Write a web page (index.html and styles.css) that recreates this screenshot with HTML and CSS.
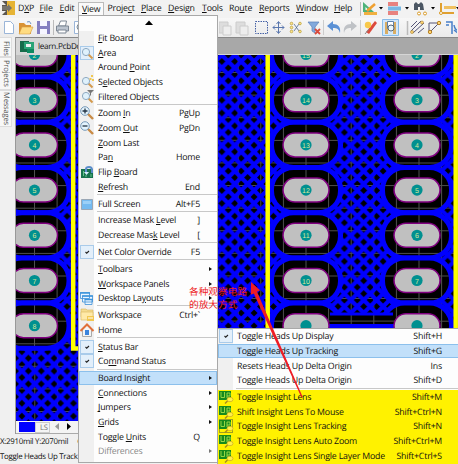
FILE: index.html
```
<!DOCTYPE html>
<html lang="en">
<head>
<meta charset="utf-8">
<title>DXP</title>
<link rel="stylesheet" href="styles.css">
</head>
<body>
<div class="app">
  <nav class="menubar">
    <svg class="logo" width="16" height="16" viewBox="0 0 16 16"><path fill="#5b5650" d="M2 1h5v14H2z"/><path fill="#e6b435" d="M7 1h8v14H7z"/><path fill="#77746d" d="M2 6h6V4l4 4-4 4v-2H2z"/><path fill="#eee" d="M2 1l4 4H2zM2 15l4-4H2z"/></svg>
    <span>D<u>X</u>P</span><span><u>F</u>ile</span><span><u>E</u>dit</span><span class="open"><u>V</u>iew</span><span>Proje<u>c</u>t</span><span><u>P</u>lace</span><span><u>D</u>esign</span><span><u>T</u>ools</span><span>Ro<u>u</u>te</span><span><u>R</u>eports</span><span><u>W</u>indow</span><span><u>H</u>elp</span>
    <svg width="99" height="18" viewBox="0 0 99 18"><path stroke="#bbb" d="M1.500 2v14"/><path fill="#4db37a" d="M4 2v10h11z"/><path fill="#fff" d="M6.500 7v3h3z"/><path stroke="#f0a030" stroke-width="2.500" d="M8 11l8-7"/><path fill="#f0b040" d="M5 12h13v3H5z"/><path d="M20 7h4l-2 2.500zM46 7h4l-2 2.500zM72 7h4l-2 2.500zM97 7h4l-2 2.500z"/><path fill="#e8827e" d="M29 2h10v4H29zM29 11h10v4H29z"/><path fill="#79b8e3" d="M29 6.500h13v4H29z"/><path fill="#4b5663" d="M55 4l2-2 2 2h1l2-2 2 2 1 6h-4V7h-2v3h-4z"/><g fill="#fff" stroke="#d99b28"><circle cx="60" cy="13.500" r="1.500"/><circle cx="66" cy="13.500" r="1.500"/></g><path fill="none" stroke="#e0a030" stroke-width="2" d="M82 3v10h13"/><path fill="#f0c060" d="M85 6h12v3H85z"/><circle cx="82" cy="13" r="1.500" fill="#fff" stroke="#d99b28"/></svg>
  </nav>
  <div class="toolbar">
    <svg width="84" height="20" viewBox="0 0 84 20"><path fill="#fff" stroke="#9ab5d8" d="M4.500 3.500h6l3 3v9h-9z"/><path fill="#d99335" d="M19 5h5l2 2h5v9H19z"/><path fill="#ffdc82" stroke="#d7a043" stroke-width=".6" d="M22 9h11l-3 7H19z"/><path fill="none" stroke="#6d94c4" d="M27 4q3-2 4 2"/><path fill="#837ec0" d="M37 3h13v13H37z"/><path fill="#f5f5ff" d="M40 3h7v5h-7zM40 11h7v5h-7z"/><path stroke="#bbb" d="M53.500 2v15"/><path fill="#fff" stroke="#7d8794" d="M58.500 8l2-5h6l-1 5z"/><path fill="#bcc4cf" stroke="#7d8794" d="M56.500 8h12v5h-12z"/><path fill="#fff" stroke="#7d8794" d="M58 12h8v3h-8z"/><path fill="#fff" stroke="#9ab5d8" d="M74.500 3.500h8v12h-8z"/><circle cx="80" cy="9" r="3" fill="#dcefff" stroke="#789"/></svg>
    <svg width="238" height="20" viewBox="0 0 238 20"><g fill="#ddd" stroke="#ccc"><path d="M0 4h9v11H0zM17 4h9v11h-9z"/><path fill="#eee" d="M4 8h8v9H4zM21 8h8v9h-8z"/></g><path fill="none" stroke="#4460a5" stroke-dasharray="1.500 1" d="M36.500 3.500h12v12h-12z"/><path fill="none" stroke="#5a77ae" d="M59.500 4v11M54 9.500h11M57.500 6l2-2.500 2 2.500M57.500 13l2 2.500 2-2.500M56 7.500l-2 2 2 2M63 7.500l2 2-2 2"/><path fill="none" stroke="#506a8c" stroke-width=".8" d="M75 6l5 7M75 13l5-7"/><g fill="#ffe88a" stroke="#b49835" stroke-width=".7"><circle cx="72.500" cy="5.500" r="1.300"/><circle cx="72.500" cy="9.500" r="1.300"/><circle cx="72.500" cy="13.500" r="1.300"/><circle cx="81" cy="5.500" r="1.300"/><circle cx="81" cy="13.500" r="1.300"/></g><path fill="#82a9dc" stroke="#5a80b8" stroke-width=".7" d="M89 4h11l-4 5v6l-3-2V9z"/><path stroke="#d94a3c" stroke-width="1.800" d="M96 11l5 5M101 11l-5 5"/><path stroke="#ccc" d="M104.500 2v15"/><path fill="#5b91d5" d="M108 8l6-5v3c5 0 8 3 7 9-1-4-3-5-7-5v3z"/><path fill="#bfc2c6" d="M138 8l-6-5v3c-5 0-8 3-7 9 1-4 3-5 7-5v3z"/><path stroke="#ccc" d="M141.500 2v15"/><path fill="#dc4a3c" d="M147 14l9-11 2 2-8 11z"/><circle cx="149" cy="7" r="3.200" fill="#f8c84a"/><path stroke="#888" d="M146 16l4-5"/><path fill="#d1e7fb" stroke="#88bce8" d="M163.500 1.500h16v16h-16z"/><path fill="#d9ad62" d="M166 4h3v12h-3zM174 4h3v12h-3z"/><path fill="#fff" stroke="#5d83ae" d="M168.500 3.500h6v7h-6z"/><circle cx="172" cy="10" r="3" fill="#e8f6ff" stroke="#567"/><path stroke="#bbb" stroke-width="1.500" d="M188.500 3v14"/><path stroke="#557" d="M192 9l6-6M192 13l10-10M194 15l11-10M199 15l6-5"/><g fill="#ffd470" stroke="#a98334" stroke-width=".6"><circle cx="193" cy="14" r="1.500"/><circle cx="203" cy="4.500" r="1.500"/></g><path fill="none" stroke="#557" d="M210 15V5h4l6 0M210 15l10-10"/><g fill="#ffd470" stroke="#b98323"><circle cx="211" cy="14" r="1.700"/><circle cx="220" cy="5" r="1.700"/></g><path fill="none" stroke="#487fc9" stroke-width="1.500" d="M227 4h6v12M227 7h3M235 7q1 6 5 5M235 12l5 4"/></svg>
  </div>
  <div class="work">
    <aside class="side"><span class="s1">Files</span><span class="s2">Projects</span><span class="s3">Messages</span></aside>
    <main class="editor">
      <div class="tabs"><div class="tab"><svg width="17" height="14" viewBox="0 0 17 14"><path fill="#166b4a" d="M1 1h9v11H1z"/><path fill="#2aa477" d="M5 2h10v7H5z"/><path fill="#eee" d="M7 4h5v3H7z"/><path fill="#0d8a61" d="M8 9h7v4H8z"/></svg>learn.PcbDoc</div></div>
      <svg class="board" width="442" height="366" viewBox="16 55 442 366">
        <defs>
          <pattern id="hatch" width="12.900" height="12.900" patternUnits="userSpaceOnUse" x="215.400" y="67.900"><path fill="none" stroke="#0000ff" stroke-width="4.200" d="M-3 3.450L9.450 15.900M3.450-3L15.900 9.450M-3 9.450L9.450-3M3.450 15.900L15.900 3.450"/></pattern>
          <pattern id="grid" width="22.600" height="22.600" patternUnits="userSpaceOnUse" x="305.500" y="72"><path d="M0 0h22.600v22.600H0z"/><path stroke="#505050" d="M.5 0v22.600M0 .5h22.600"/></pattern>
          <pattern id="grid-a" width="22.600" height="22.600" patternUnits="userSpaceOnUse" x="-.5" y="-5"><path d="M0 0h22.600v22.600H0z"/><path stroke="#505050" d="M.5 0v22.600M0 .5h22.600"/></pattern>
          <pattern id="grid-b" width="22.600" height="22.600" patternUnits="userSpaceOnUse" x="1.500" y="-5"><path d="M0 0h22.600v22.600H0z"/><path stroke="#505050" d="M.5 0v22.600M0 .5h22.600"/></pattern>
          <g id="ring"><rect x="-34.500" y="-22.600" width="69" height="45.200" rx="22" stroke="#0000ff" stroke-width="5"/></g>
          <g id="pad"><rect x="-23" y="-12" width="46" height="24" rx="12" fill="#c0c0c0" stroke="#800080" stroke-width="1.500"/><circle r="5.600" fill="#009090"/></g>
          <g id="rings"><use href="#ring" y="54.500"/><use href="#ring" y="99.700"/><use href="#ring" y="144.900"/><use href="#ring" y="190.100"/><use href="#ring" y="235.300"/><use href="#ring" y="280.500"/><use href="#ring" y="325.700"/></g>
          <g id="pads"><use href="#pad" y="54.500"/><use href="#pad" y="99.700"/><use href="#pad" y="144.900"/><use href="#pad" y="190.100"/><use href="#pad" y="235.300"/><use href="#pad" y="280.500"/><use href="#pad" y="325.700"/></g>
        </defs>
        <path fill="url(#grid)" d="M16 55h442v366H16z"/><path fill="url(#hatch)" d="M16 55h442v366H16z"/>
        <use href="#rings" x="34.500" fill="url(#grid-a)"/><use href="#rings" x="306" fill="url(#grid-a)"/><use href="#rings" x="417" fill="url(#grid-b)"/>
        <path fill="url(#grid)" d="M325 315h74v9h-74z"/><path fill="#00f" d="M330 312.500h63v3h-63zM328 324h68v5h-68z"/>
        <use href="#pads" x="34.500"/><use href="#pads" x="306"/><use href="#pads" x="417"/>
        <path fill="none" stroke="#ff0" stroke-width="4.500" d="M73.200 55v293.500H268M267.700 55v293M455.700 55v293"/>
        <g class="nums"><text x="34.500" y="57.500">2</text><text x="34.500" y="102.700">3</text><text x="34.500" y="147.900">4</text><text x="34.500" y="193.100">5</text><text x="34.500" y="238.300">6</text><text x="34.500" y="283.500">7</text><text x="34.500" y="328.700">8</text><text x="306" y="57.500">15</text><text x="306" y="102.700">14</text><text x="306" y="147.900">13</text><text x="306" y="193.100">12</text><text x="306" y="238.300">11</text><text x="306" y="283.500">10</text><text x="417" y="57.500">2</text><text x="417" y="102.700">3</text><text x="417" y="147.900">4</text><text x="417" y="193.100">5</text><text x="417" y="238.300">6</text><text x="417" y="283.500">7</text></g>
      </svg>
      <div class="layers"><i class="swatch"></i><span class="ls">LS</span><svg width="24" height="12" viewBox="0 0 24 12"><path fill="#999" d="M9 2v7L5 5.500z"/><path d="M17 2v7l4-3.500z"/></svg></div>
    </main>
  </div>
  <footer class="status"><div>X:2910mil Y:2070mil<span class="grid-read">G</span></div><div>Toggle Heads Up Track</div></footer>
</div>

<div class="menu main">
  <div class="scroll"><svg width="8" height="5" viewBox="0 0 8 5"><path d="M0 5l4-4.500L8 5z"/></svg></div>
  <div class="row"><i></i><span><u>F</u>it Board</span></div>
  <div class="row"><i class="box"><svg viewBox="0 0 14 14"><use href="#lens"/></svg></i><span><u>A</u>rea</span></div>
  <div class="row"><i></i><span>Around <u>P</u>oint</span></div>
  <div class="row"><i><svg viewBox="0 0 14 14"><use href="#lens"/><path fill="#f0c850" d="M11 0h2v2h-2zM9.500 3h2v2h-2zM12 4h2v2h-2z"/></svg></i><span>S<u>e</u>lected Objects</span></div>
  <div class="row"><i><svg viewBox="0 0 14 14"><use href="#lens"/><path fill="#777" d="M7 0h7l-3 3v3l-1-1V3z"/></svg></i><span>Filtered Ob<u>j</u>ects</span></div>
  <hr>
  <div class="row"><i><svg viewBox="0 0 14 14"><use href="#biglens"/><path stroke="#234" stroke-width="1.300" d="M2.500 5h5M5 2.500v5"/></svg></i><span>Zoom <u>I</u>n</span><b>PgUp</b></div>
  <div class="row"><i><svg viewBox="0 0 14 14"><use href="#biglens"/><path stroke="#234" stroke-width="1.300" d="M2.500 5h5"/></svg></i><span>Zoom <u>O</u>ut</span><b>PgDn</b></div>
  <div class="row"><i></i><span><u>Z</u>oom Last</span></div>
  <div class="row"><i></i><span>Pa<u>n</u></span><b>Home</b></div>
  <div class="row"><i><svg viewBox="0 0 14 14"><path fill="#17724d" d="M1 4h12v9H1z"/><path stroke="#62c38a" d="M3.500 6v5M6 10v2M11 9v3"/><path fill="none" stroke="#5b8dca" stroke-width="2" d="M6 8V4q0-2 3-2t3 3v3"/><path fill="#d9ecff" d="M4 7h5l-2.500 3z"/></svg></i><span>Flip <u>B</u>oard</span></div>
  <div class="row"><i></i><span><u>R</u>efresh</span><b>End</b></div>
  <hr>
  <div class="row"><i><svg viewBox="0 0 14 14"><path fill="#74baf0" stroke="#9aa7b5" d="M1.500 2.500h11v10h-11z"/><path fill="#9bd0f7" d="M3 4h8v3H3z"/></svg></i><span>Full Screen</span><b>Alt+F5</b></div>
  <hr>
  <div class="row"><i></i><span>Increase Mask <u>L</u>evel</span><b>]</b></div>
  <div class="row"><i></i><span>Decrease Mas<u>k</u> Level</span><b>[</b></div>
  <hr>
  <div class="row"><i class="box"><svg viewBox="0 0 14 14"><use href="#check"/></svg></i><span>Net Color Override</span><b>F5</b></div>
  <hr>
  <div class="row sub"><i></i><span><u>T</u>oolbars</span></div>
  <div class="row sub"><i></i><span><u>W</u>orkspace Panels</span></div>
  <div class="row sub"><i><svg viewBox="0 0 14 14"><path fill="#eaf5ff" stroke="#3d8fd8" stroke-width=".8" d="M.5 1.500h9v6h-9zM2.500 5h10v6h-10zM5 8.500h7v5H5z"/><path stroke="#3d94dc" stroke-width="1.600" d="M0 2h10M2 5h11M4.500 8.500H13"/></svg></i><span>Desktop La<u>y</u>outs</span></div>
  <hr>
  <div class="row"><i><svg viewBox="0 0 14 14"><path fill="#f5dc91" stroke="#d9b75d" stroke-width=".6" d="M1 1h5l1 1h6v7H1z"/><path fill="#ffeaa8" stroke="#d9b75d" stroke-width=".6" d="M1 4h12v8H1z"/><path fill="#f2c850" d="M7 8h7v5H7z"/><path stroke="#fff" d="M8 10h5"/></svg></i><span>Workspace</span><b>Ctrl+`</b></div>
  <div class="row"><i><svg viewBox="0 0 14 14"><path fill="#f4f4f4" stroke="#aaa" d="M2.500 6L7 2l4.500 4v7.500h-9z"/><path fill="#3a83dc" d="M5 7h4v5H5z"/><path fill="none" stroke="#e0703a" stroke-width="2" d="M.5 8L7 1.500 13.500 8"/></svg></i><span>Home</span></div>
  <hr>
  <div class="row"><i class="box"><svg viewBox="0 0 14 14"><use href="#check"/></svg></i><span><u>S</u>tatus Bar</span></div>
  <div class="row"><i class="box"><svg viewBox="0 0 14 14"><use href="#check"/></svg></i><span>Co<u>m</u>mand Status</span></div>
  <hr>
  <div class="row sub hot"><i></i><span>Board Insight</span></div>
  <div class="row sub"><i></i><span><u>C</u>onnections</span></div>
  <div class="row sub"><i></i><span><u>J</u>umpers</span></div>
  <div class="row sub"><i></i><span><u>G</u>rids</span></div>
  <div class="row"><i></i><span>Toggle <u>U</u>nits</span><b>Q</b></div>
  <div class="row sub off"><i></i><span>Differences</span></div>
</div>

<div class="menu insight">
  <div class="row"><i class="box"><svg viewBox="0 0 14 14"><use href="#check"/></svg></i><span>Toggle Heads Up Display</span><b>Shift+H</b></div>
  <div class="row hot"><i></i><span>Toggle Heads Up Tracking</span><b>Shift+G</b></div>
  <div class="row"><i></i><span>Resets Heads Up Delta Origin</span><b>Ins</b></div>
  <div class="row"><i></i><span>Toggle Heads Up Delta Origin</span><b>Shift+D</b></div>
  <hr>
  <div class="marked">
    <div class="row"><i><svg viewBox="0 0 14 14"><use href="#pcb"/></svg></i><span>Toggle Insight Lens</span><b>Shift+M</b></div>
    <div class="row"><i><svg viewBox="0 0 14 14"><use href="#pcb"/></svg></i><span>Shift Insight Lens To Mouse</span><b>Shift+Ctrl+N</b></div>
    <div class="row"><i class="ring"><svg viewBox="0 0 14 14"><use href="#pcb"/></svg></i><span>Toggle Insight Lens Tracking</span><b>Shift+N</b></div>
    <div class="row"><i><svg viewBox="0 0 14 14"><use href="#pcb"/></svg></i><span>Toggle Insight Lens Auto Zoom</span><b>Shift+Ctrl+M</b></div>
    <div class="row"><i><svg viewBox="0 0 14 14"><use href="#pcb"/></svg></i><span>Toggle Insight Lens Single Layer Mode</span><b>Shift+Ctrl+S</b></div>
  </div>
</div>

<div class="note">各种观察电路<br>的放大方式</div>
<svg class="arrow" width="458" height="464" viewBox="0 0 458 464">
  <defs>
    <g id="lens"><path stroke="#d49a4c" stroke-width="2" d="M8.500 8.500l4 4"/><circle cx="6" cy="6" r="3.600" fill="#dff1fc" stroke="#8fa9c0"/></g>
    <g id="biglens"><path stroke="#c98b45" stroke-width="2.400" d="M8 8l5 5"/><circle cx="5" cy="5" r="4.300" fill="#e3f3fd" stroke="#7598b8"/></g>
    <path id="check" fill="none" stroke="#222" stroke-width="1.100" d="M5.500 7l1.200 1.200L9 6"/>
    <g id="pcb"><path fill="#168a1c" d="M0 1h12v9H0z"/><path fill="none" stroke="#a4dc48" stroke-width=".9" d="M2 2v5.500h3.500V2M8 8V3h3v3H8"/><path stroke="#a58a20" stroke-width="1.500" d="M9 10.500l-3 3"/><ellipse cx="11" cy="9.500" rx="3" ry="2.200" fill="#fff04a" stroke="#d2b020" stroke-width=".8"/></g>
  </defs>
  <path fill="#ee1c25" d="M251 282l-.2 12.800 3-1.300L301.500 397.500l1.200-.5L257 291.800l3-1.500z"/>
</svg>
</body>
</html>
```
FILE: styles.css
```
* { box-sizing: border-box; }
body { margin: 0; width: 458px; height: 464px; overflow: hidden; position: relative; background: #f0f0f0; color: #111; font: 8.8px/14px "Open Sans", "Noto Sans", sans-serif; letter-spacing: -.2px; text-rendering: geometricPrecision; }
u { text-decoration-thickness: 1px; text-underline-offset: 1px; }
svg { display: block; flex: none; }
.app { display: flex; flex-direction: column; height: 464px; }
.menubar { display: grid; flex: none; grid-template-columns: 18px 21.5px 20px 19px 29px 33.5px 27px 34px 27px 30px 37px 38px 25px 99px; height: 18px; line-height: 17px; white-space: nowrap; background: #f2f2f2; overflow: hidden; }
.menubar .open { margin: 2px 4px 0 -0.5px; padding-left: 3px; line-height: 13px; border: 1px solid #bbb; border-bottom: 0; background: #fafafa; }
.toolbar { display: flex; flex: none; justify-content: space-between; height: 19px; background: linear-gradient(#f7f7f7, #ebebeb); overflow: hidden; }
.toolbar svg:last-child { margin-right: 1px; }
.work { display: flex; flex: none; height: 397px; }
.side { width: 16px; flex: none; display: flex; flex-direction: column; border-right: 1px solid #999; }
.side span { width: 12px; writing-mode: vertical-rl; font-size: 7.6px; line-height: 11px; color: #555; background: #f8f8f8; border: 1px solid #ddd; border-left: 0; letter-spacing: -.2px; }
.side .s1 { height: 20px; padding-top: 3px; }
.side .s2 { height: 33px; padding-top: 2px; }
.side .s3 { height: 37px; padding-top: 1px; }
.editor { width: 442px; }
.tabs { height: 18px; background: #a8a8a8; border-top: 1px solid #888; border-bottom: 1px solid #d5d5d5; }
.tab { width: 90px; height: 16px; display: flex; gap: 2px; padding: 2px 0 0 3px; background: #d6d6d6; font-size: 8.2px; line-height: 13px; letter-spacing: -.3px; white-space: nowrap; }
.nums text { fill: #d8e89a; font: 7px "Liberation Sans", sans-serif; text-anchor: middle; letter-spacing: 0; }
.layers { display: flex; align-items: center; height: 13px; padding-left: 3px; border-bottom: 1px solid #aaa; background: #f4f4f4; }
.swatch { width: 16px; height: 10px; background: #00f; }
.ls { width: 15px; height: 11px; padding-left: 4px; border: 1px solid #ccc; font-size: 7.6px; line-height: 10px; color: #777; }
.status { width: 78px; height: 30px; padding-top: 1px; font-size: 7.9px; line-height: 14.5px; letter-spacing: -.3px; white-space: nowrap; overflow: hidden; }
.grid-read { padding-left: 9px; }
.menu { position: absolute; background: #fdfdfd; border: 1px solid #a8a8a8; white-space: nowrap; }
.menu hr { height: 2.25px; margin: 0 0 0 18px; border: 0; border-top: 1px solid #c8c8c8; }
.main { left: 78px; top: 15px; width: 140px; height: 448px; background: linear-gradient(90deg, #f0f0f0 15px, #fdfdfd 15px); }
.scroll { height: 14.7px; padding: 4px 0 0 66px; background: #fdfdfd; }
.row { display: flex; align-items: center; height: 14.65px; line-height: 14px; padding-right: 17px; }
.row i { width: 14px; height: 14px; margin: 0 4px 0 1px; flex: none; }
.row i svg { width: 14px; height: 14px; overflow: visible; }
.row span { flex: 1; }
.row b { font-weight: 400; }
.row .box { background: #e3effa; box-shadow: inset 0 0 0 1px #a9cbea; }
.sub { padding-right: 5px; }
.sub::after { content: ""; border-left: 3px solid #111; border-top: 2.5px solid transparent; border-bottom: 2.5px solid transparent; }
.hot { background: #c2e0fa; box-shadow: inset 0 0 0 1px #8cc0ec; }
.off { color: #888; }
.off::after { border-left-color: #777; }
.insight { left: 217px; top: 328px; width: 243px; height: 136px; background: linear-gradient(90deg, #f0f0f0 15px, #fdfdfd 15px); }
.marked { background: #fff200; height: 74px; }
.row .ring { box-shadow: inset 0 0 0 1px #a0a020; }
.note { position: absolute; left: 189px; top: 285px; color: #ee1c25; font: 9.7px/12.5px "Noto Sans CJK SC", sans-serif; letter-spacing: 0; }
.arrow { position: absolute; left: 0; top: 0; pointer-events: none; }
```
